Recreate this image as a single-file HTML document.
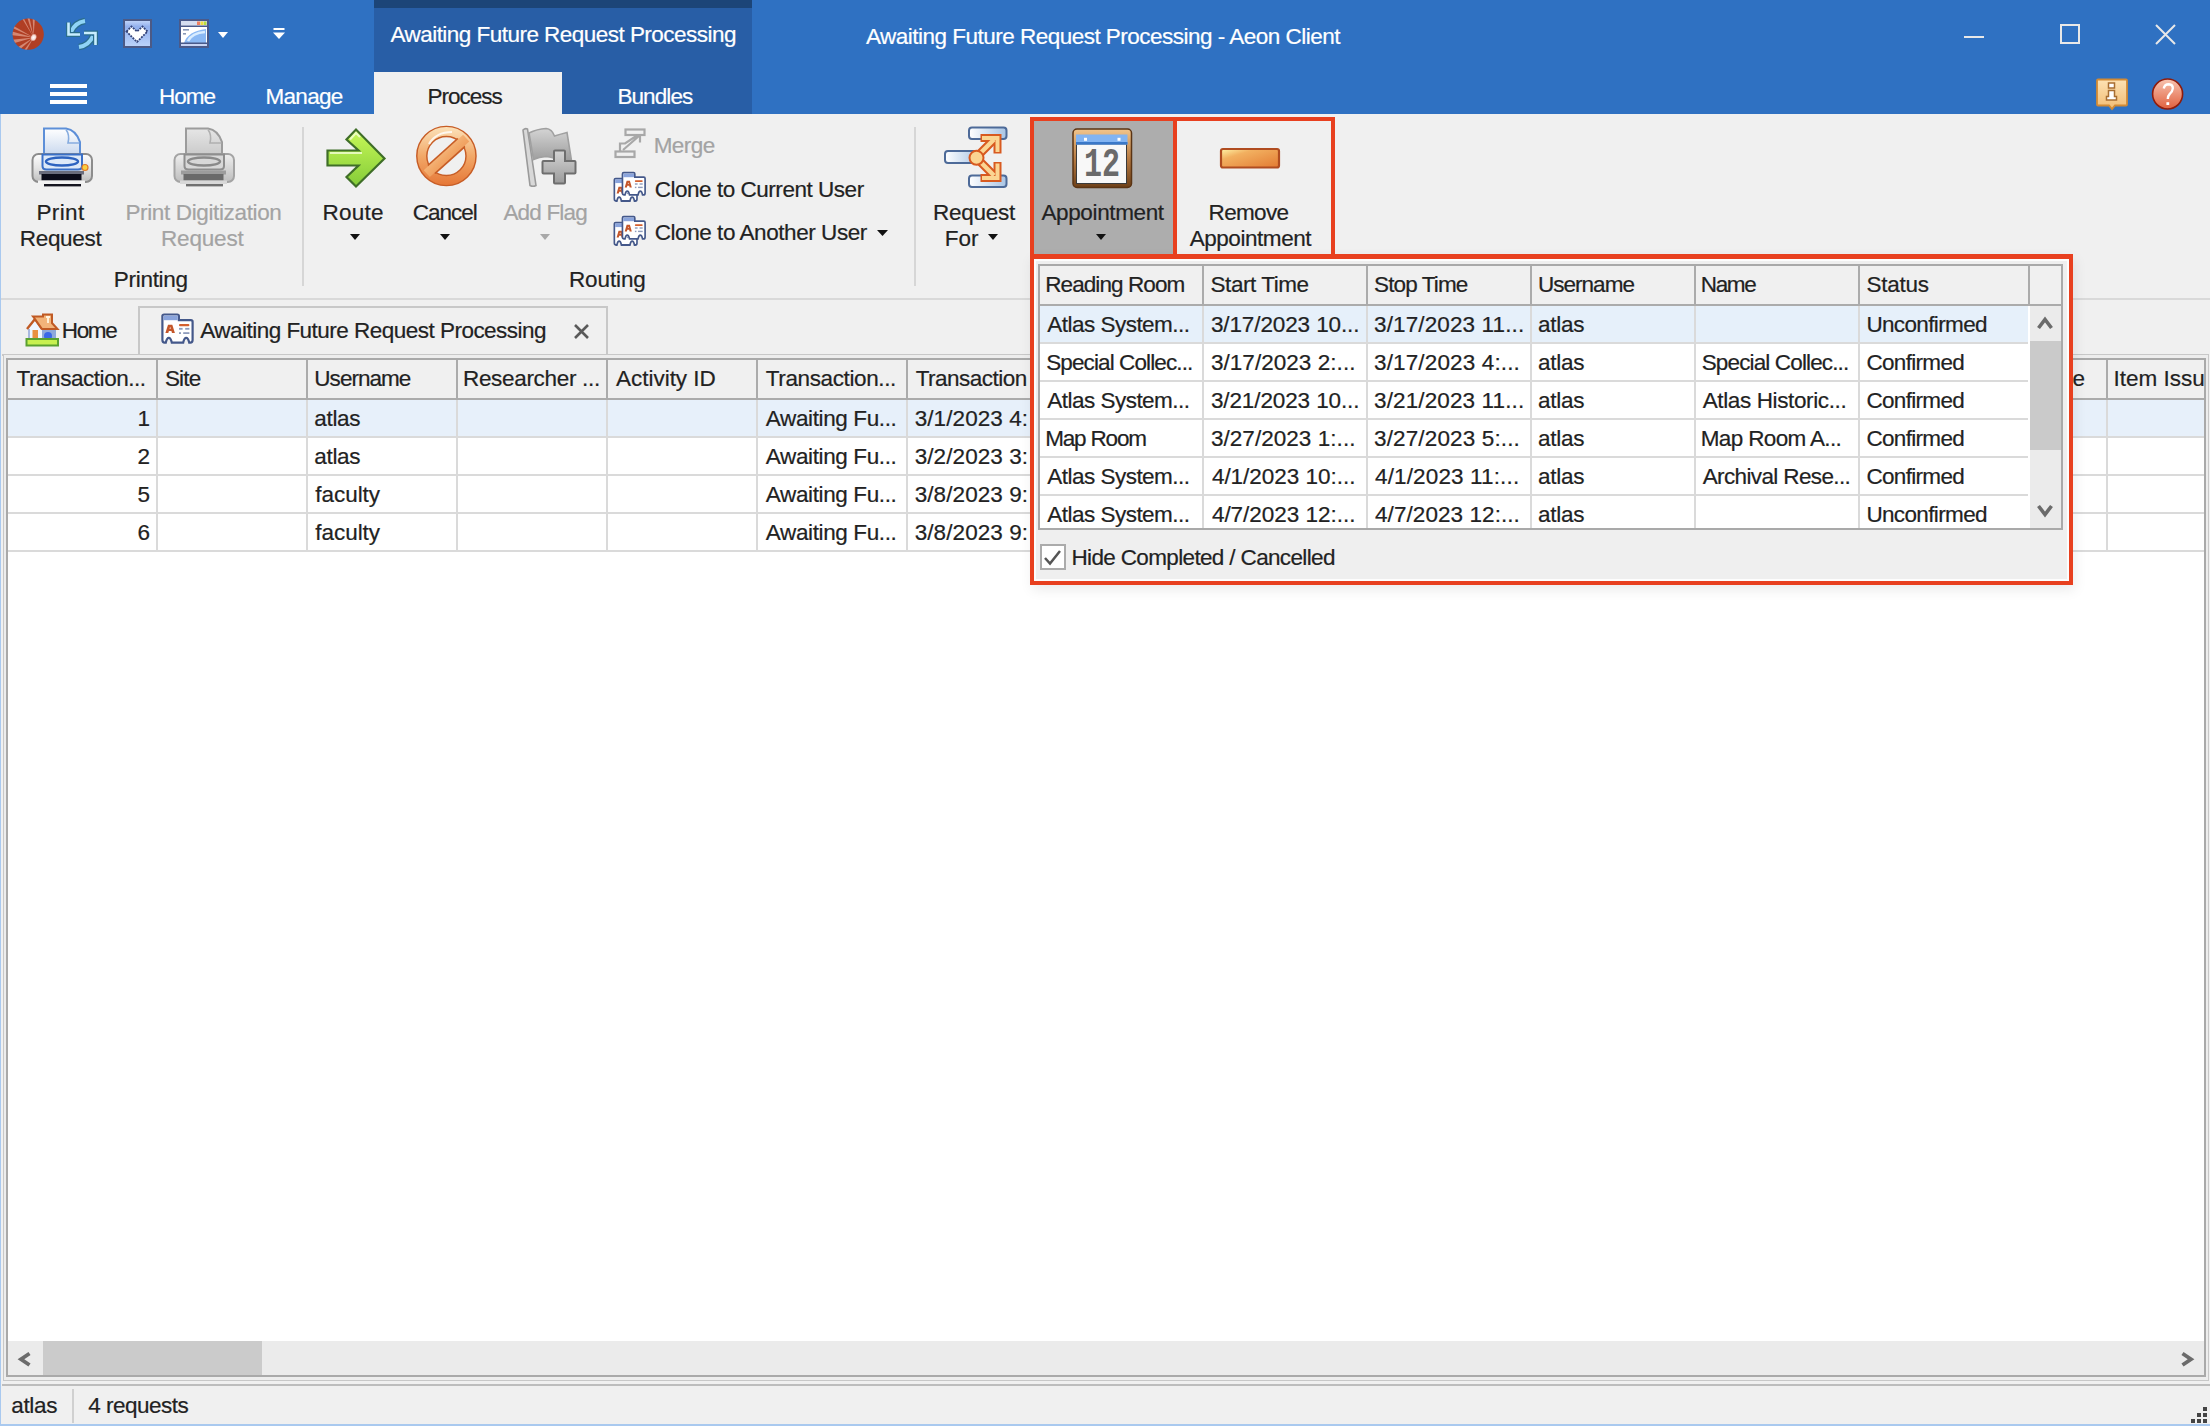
<!DOCTYPE html>
<html><head><meta charset="utf-8">
<style>
*{margin:0;padding:0;box-sizing:border-box}
html,body{width:2210px;height:1426px;overflow:hidden;background:#f0f0f0}
body{position:relative;font-family:"Liberation Sans",sans-serif;font-size:22px;color:#222}
.a{position:absolute}
.t{position:absolute;white-space:nowrap;line-height:22px;height:22px;font-size:22.5px;color:#222;z-index:2;-webkit-text-stroke:0.2px currentColor}
.t.w{color:#fff}
.t.g{color:#a3a3a3}
.t.p{z-index:12}
svg.i{position:absolute;overflow:visible}
.hl{position:absolute;height:2px}
.vl{position:absolute;width:2px}
.z1{z-index:1}
.pop{z-index:10}
.pop2{z-index:11}
.top{z-index:13}
</style></head><body>
<!-- ===== HEADER ===== -->
<div class="a" style="left:0;top:0;width:2210px;height:114px;background:#2f71c2"></div>
<div class="a" style="left:374px;top:0;width:378px;height:114px;background:#285ea6"></div>
<div class="a" style="left:374px;top:0;width:378px;height:8px;background:#1c4578"></div>
<div class="a" style="left:374px;top:72px;width:188px;height:42px;background:#f0f0f0"></div>
<!-- hamburger -->
<div class="a" style="left:50px;top:84px;width:37px;height:4px;background:#fff"></div>
<div class="a" style="left:50px;top:92px;width:37px;height:4px;background:#fff"></div>
<div class="a" style="left:50px;top:100px;width:37px;height:4px;background:#fff"></div>
<!-- window controls -->
<div class="a" style="left:1964px;top:36px;width:20px;height:2px;background:#e8e8e8"></div>
<div class="a" style="left:2060px;top:24px;width:20px;height:20px;border:2px solid #e8e8e8"></div>
<svg class="i" style="left:2155px;top:24px" width="21" height="21"><path d="M1 1L20 20M20 1L1 20" stroke="#e8e8e8" stroke-width="2"/></svg>

<!-- ===== RIBBON ===== -->
<div class="a" style="left:0;top:114px;width:1px;height:1312px;background:#a9c9ef;z-index:20"></div>
<div class="hl" style="left:0;top:298px;width:2210px;background:#d9d9d9"></div>
<div class="vl" style="left:302px;top:127px;height:159px;background:#d6d6d6"></div>
<div class="vl" style="left:914px;top:127px;height:159px;background:#d6d6d6"></div>
<!-- appointment pressed -->
<div class="a" style="left:1034px;top:121px;width:139px;height:133px;background:#adadad"></div>
<!-- red highlight boxes -->
<div class="a" style="left:1030px;top:117px;width:147px;height:141px;border:4px solid #e8401f;z-index:14"></div>
<div class="a" style="left:1173px;top:117px;width:162px;height:141px;border:4px solid #e8401f;z-index:14"></div>

<!-- ===== DOC TABS ===== -->
<div class="hl" style="left:2px;top:354px;width:137px;background:#c8c8c8"></div>
<div class="hl" style="left:606px;top:354px;width:1604px;background:#c8c8c8"></div>
<div class="vl" style="left:138px;top:306px;height:50px;background:#c8c8c8"></div>
<div class="vl" style="left:606px;top:306px;height:50px;background:#c8c8c8"></div>
<div class="hl" style="left:138px;top:306px;width:470px;background:#c8c8c8"></div>
<svg class="i" style="left:574px;top:324px" width="15" height="15"><path d="M1 1L14 14M14 1L1 14" stroke="#5a5a5a" stroke-width="2.6"/></svg>

<!-- ===== MAIN GRID ===== -->
<div class="a" style="left:3px;top:354px;width:2206px;height:1027px;border:1.5px solid #c8c8c8;background:#ededed"></div>
<div class="a" style="left:6px;top:358px;width:2202px;height:1019px;border:2px solid #a9a9a9;background:#fff"></div>
<div class="a" style="left:8px;top:360px;width:2196px;height:38px;background:#f0f0f0"></div>
<div class="hl" style="left:8px;top:398px;width:2196px;background:#ababab"></div>
<div class="a" style="left:8px;top:400px;width:2196px;height:36px;background:#e7f0fa"></div>
<div class="vl" style="left:156px;top:360px;height:38px;background:#ababab"></div>
<div class="vl" style="left:156px;top:400px;height:152px;background:#dadada"></div>
<div class="vl" style="left:306px;top:360px;height:38px;background:#ababab"></div>
<div class="vl" style="left:306px;top:400px;height:152px;background:#dadada"></div>
<div class="vl" style="left:456px;top:360px;height:38px;background:#ababab"></div>
<div class="vl" style="left:456px;top:400px;height:152px;background:#dadada"></div>
<div class="vl" style="left:606px;top:360px;height:38px;background:#ababab"></div>
<div class="vl" style="left:606px;top:400px;height:152px;background:#dadada"></div>
<div class="vl" style="left:756px;top:360px;height:38px;background:#ababab"></div>
<div class="vl" style="left:756px;top:400px;height:152px;background:#dadada"></div>
<div class="vl" style="left:906px;top:360px;height:38px;background:#ababab"></div>
<div class="vl" style="left:906px;top:400px;height:152px;background:#dadada"></div>
<div class="vl" style="left:1056px;top:360px;height:38px;background:#ababab"></div>
<div class="vl" style="left:1056px;top:400px;height:152px;background:#dadada"></div>
<div class="vl" style="left:1206px;top:360px;height:38px;background:#ababab"></div>
<div class="vl" style="left:1206px;top:400px;height:152px;background:#dadada"></div>
<div class="vl" style="left:1356px;top:360px;height:38px;background:#ababab"></div>
<div class="vl" style="left:1356px;top:400px;height:152px;background:#dadada"></div>
<div class="vl" style="left:1506px;top:360px;height:38px;background:#ababab"></div>
<div class="vl" style="left:1506px;top:400px;height:152px;background:#dadada"></div>
<div class="vl" style="left:1656px;top:360px;height:38px;background:#ababab"></div>
<div class="vl" style="left:1656px;top:400px;height:152px;background:#dadada"></div>
<div class="vl" style="left:1806px;top:360px;height:38px;background:#ababab"></div>
<div class="vl" style="left:1806px;top:400px;height:152px;background:#dadada"></div>
<div class="vl" style="left:1956px;top:360px;height:38px;background:#ababab"></div>
<div class="vl" style="left:1956px;top:400px;height:152px;background:#dadada"></div>
<div class="vl" style="left:2106px;top:360px;height:38px;background:#ababab"></div>
<div class="vl" style="left:2106px;top:400px;height:152px;background:#dadada"></div>
<div class="hl" style="left:8px;top:436px;width:2196px;background:#dadada"></div>
<div class="hl" style="left:8px;top:474px;width:2196px;background:#dadada"></div>
<div class="hl" style="left:8px;top:512px;width:2196px;background:#dadada"></div>
<div class="hl" style="left:8px;top:550px;width:2196px;background:#dadada"></div>
<div class="a" style="left:2204px;top:358px;width:5px;height:1019px;background:#ededed;z-index:3;border-left:2px solid #a9a9a9;border-right:1.5px solid #c8c8c8"></div>
<div class="a" style="left:2209px;top:354px;width:1px;height:1030px;background:#f0f0f0;z-index:3"></div>
<!-- h scrollbar -->
<div class="a" style="left:8px;top:1341px;width:2196px;height:34px;background:#ebebeb;z-index:3"></div>
<div class="a" style="left:43px;top:1341px;width:219px;height:34px;background:#cbcbcb;z-index:3"></div>
<svg class="i" style="left:18px;top:1352px;z-index:3" width="13" height="14"><path d="M11.5 1.5L3 7.2L11.5 13" fill="none" stroke="#6b6b6b" stroke-width="3.8"/></svg>
<svg class="i" style="left:2181px;top:1352px;z-index:3" width="13" height="14"><path d="M1.5 1.5L10 7.2L1.5 13" fill="none" stroke="#6b6b6b" stroke-width="3.8"/></svg>

<!-- ===== STATUS BAR ===== -->
<div class="hl" style="left:2px;top:1384px;width:2208px;background:#bdbdbd"></div>
<div class="vl" style="left:72px;top:1389px;height:34px;background:#d0d0d0"></div>
<div class="hl" style="left:0;top:1424px;width:2210px;background:#a9c9ef"></div>
<svg class="i" style="left:2190px;top:1406px" width="18" height="18"><g fill="#444"><rect x="13" y="1" width="4" height="4"/><rect x="7" y="7" width="4" height="4"/><rect x="13" y="7" width="4" height="4"/><rect x="1" y="13" width="4" height="4"/><rect x="7" y="13" width="4" height="4"/><rect x="13" y="13" width="4" height="4"/></g></svg>

<!-- ===== POPUP ===== -->
<div class="a pop" style="left:1030px;top:254px;width:1043px;height:331px;background:#efefef;box-shadow:2px 5px 12px rgba(0,0,0,0.08)"></div>
<div class="a pop" style="left:1034px;top:259px;width:1035px;height:322px;border:2px solid #fdfdfd"></div>
<div class="a pop" style="left:1038px;top:264px;width:1025px;height:266px;border:2px solid #a9a9a9;background:#fff"></div>
<div class="a pop" style="left:1040px;top:266px;width:1021px;height:38px;background:#f0f0f0"></div>
<div class="hl pop" style="left:1040px;top:304px;width:1021px;background:#ababab"></div>
<div class="a pop" style="left:1040px;top:306px;width:988px;height:36px;background:#e6f0fa"></div>
<div class="vl pop" style="left:1202px;top:266px;height:38px;background:#ababab"></div>
<div class="vl pop" style="left:1202px;top:306px;height:222px;background:#dadada"></div>
<div class="vl pop" style="left:1366px;top:266px;height:38px;background:#ababab"></div>
<div class="vl pop" style="left:1366px;top:306px;height:222px;background:#dadada"></div>
<div class="vl pop" style="left:1530px;top:266px;height:38px;background:#ababab"></div>
<div class="vl pop" style="left:1530px;top:306px;height:222px;background:#dadada"></div>
<div class="vl pop" style="left:1694px;top:266px;height:38px;background:#ababab"></div>
<div class="vl pop" style="left:1694px;top:306px;height:222px;background:#dadada"></div>
<div class="vl pop" style="left:1858px;top:266px;height:38px;background:#ababab"></div>
<div class="vl pop" style="left:1858px;top:306px;height:222px;background:#dadada"></div>
<div class="vl pop" style="left:2028px;top:266px;height:38px;background:#ababab"></div>
<div class="hl pop" style="left:1040px;top:342px;width:988px;background:#dadada"></div>
<div class="hl pop" style="left:1040px;top:380px;width:988px;background:#dadada"></div>
<div class="hl pop" style="left:1040px;top:418px;width:988px;background:#dadada"></div>
<div class="hl pop" style="left:1040px;top:456px;width:988px;background:#dadada"></div>
<div class="hl pop" style="left:1040px;top:494px;width:988px;background:#dadada"></div>
<!-- popup scrollbar -->
<div class="a pop" style="left:2030px;top:306px;width:31px;height:222px;background:#ebebeb"></div>
<div class="a pop" style="left:2030px;top:341px;width:31px;height:109px;background:#cacaca"></div>
<svg class="i pop" style="left:2037px;top:316px" width="16" height="13"><path d="M1.5 12L8 3.5L14.5 12" fill="none" stroke="#6b6b6b" stroke-width="3.6"/></svg>
<svg class="i pop" style="left:2037px;top:505px" width="16" height="13"><path d="M1.5 1L8 9.5L14.5 1" fill="none" stroke="#6b6b6b" stroke-width="3.6"/></svg>
<!-- checkbox -->
<div class="a pop" style="left:1040px;top:544px;width:26px;height:26px;border:2px solid #ababab;background:#fff"></div>
<svg class="i pop2" style="left:1043px;top:549px" width="20" height="17"><path d="M2 9L7 14.5L17 2" fill="none" stroke="#555" stroke-width="2.5"/></svg>
<div class="a top" style="left:1030px;top:254px;width:1043px;height:331px;border:4px solid #e8401f;border-top-width:5px"></div>
<!-- ===== ICONS ===== -->
<svg width="0" height="0" style="position:absolute">
<defs>
<linearGradient id="gPaper" x1="0" y1="0" x2="0" y2="1"><stop offset="0" stop-color="#ffffff"/><stop offset="1" stop-color="#c9d8ee"/></linearGradient>
<linearGradient id="gBody" x1="0" y1="0" x2="0" y2="1"><stop offset="0" stop-color="#fdfdfd"/><stop offset="0.5" stop-color="#e4e4e4"/><stop offset="1" stop-color="#bdbdbd"/></linearGradient>
<linearGradient id="gGreen" x1="0" y1="0" x2="0" y2="1"><stop offset="0" stop-color="#c8f858"/><stop offset="1" stop-color="#84cc38"/></linearGradient>
<linearGradient id="gOrange" x1="0" y1="0" x2="0" y2="1"><stop offset="0" stop-color="#fbe0b0"/><stop offset="0.55" stop-color="#f0a060"/><stop offset="1" stop-color="#e57a3a"/></linearGradient>
<linearGradient id="gGray" x1="0" y1="0" x2="0" y2="1"><stop offset="0" stop-color="#d4d4d4"/><stop offset="1" stop-color="#9a9a9a"/></linearGradient>
<linearGradient id="gBrown" x1="0" y1="0" x2="0" y2="1"><stop offset="0" stop-color="#f2c58c"/><stop offset="0.5" stop-color="#b87c44"/><stop offset="1" stop-color="#6e4018"/></linearGradient>
<linearGradient id="gBar" x1="0" y1="0" x2="1" y2="1"><stop offset="0" stop-color="#fff4a8"/><stop offset="0.3" stop-color="#f2b060"/><stop offset="1" stop-color="#e27a32"/></linearGradient>
<linearGradient id="gInfo" x1="0" y1="0" x2="0" y2="1"><stop offset="0" stop-color="#fde2b4"/><stop offset="1" stop-color="#f2bc74"/></linearGradient>
<linearGradient id="gHelp" x1="0" y1="0" x2="0" y2="1"><stop offset="0" stop-color="#f8c4b0"/><stop offset="1" stop-color="#e0603e"/></linearGradient>
<linearGradient id="gBlueBar" x1="0" y1="0" x2="1" y2="0"><stop offset="0" stop-color="#ffffff"/><stop offset="1" stop-color="#a8c4e4"/></linearGradient>
<radialGradient id="gLogo" cx="0.68" cy="0.6" r="0.7"><stop offset="0" stop-color="#ffffff"/><stop offset="0.15" stop-color="#e8a894"/><stop offset="0.5" stop-color="#c05436"/><stop offset="1" stop-color="#b03c20"/></radialGradient>
<g id="printer">
  <path d="M18 6.5H40Q50 8 54 20V33H18Z" fill="url(#gPaper)" stroke="#5d8fd8" stroke-width="2"/>
  <path d="M40 7.5Q44 13 42 21H53.5" fill="none" stroke="#86acdf" stroke-width="1.6"/>
  <rect x="6.5" y="32" width="59.5" height="28" rx="6" fill="url(#gBody)" stroke="#8c8c8c" stroke-width="2"/>
  <path d="M16.5 32.5H56V44Q56 47.5 52 47.5H20.5Q16.5 47.5 16.5 44Z" fill="#dde9f8" stroke="#3a70c8" stroke-width="2"/>
  <ellipse cx="36" cy="39.5" rx="16" ry="4" fill="none" stroke="#2d63c0" stroke-width="2.4"/>
  <rect x="13" y="49" width="45" height="3.5" fill="#6a6c7c"/>
  <rect x="15.5" y="52" width="40" height="6.5" fill="#0c0c1a"/>
  <rect x="12" y="58.5" width="47" height="3.5" fill="#f2f2f2"/>
  <rect x="18" y="62" width="37" height="2.4" fill="#15151f"/>
  <circle cx="59" cy="45.5" r="3" fill="#f8d040" stroke="#e07a2a" stroke-width="1.2"/>
</g>
<g id="printerG">
  <path d="M18 6.5H40Q50 8 54 20V33H18Z" fill="url(#gPaperG)" stroke="#9c9c9c" stroke-width="2"/>
  <path d="M40 7.5Q44 13 42 21H53.5" fill="none" stroke="#b0b0b0" stroke-width="1.6"/>
  <rect x="6.5" y="32" width="59.5" height="28" rx="6" fill="url(#gBodyG)" stroke="#a4a4a4" stroke-width="2"/>
  <path d="M16.5 32.5H56V44Q56 47.5 52 47.5H20.5Q16.5 47.5 16.5 44Z" fill="#d8d8d8" stroke="#8e8e8e" stroke-width="2"/>
  <ellipse cx="36" cy="39.5" rx="16" ry="4" fill="none" stroke="#8a8a8a" stroke-width="2.4"/>
  <rect x="13" y="48.5" width="45" height="4" fill="#9c9c9c"/>
  <rect x="15.5" y="52" width="40" height="6.5" fill="#6a6a6a"/>
  <rect x="12" y="58.5" width="47" height="3.5" fill="#d8d8d8"/>
  <rect x="18" y="62" width="37" height="2.4" fill="#707070"/>
</g>
<linearGradient id="gPaperG" x1="0" y1="0" x2="0" y2="1"><stop offset="0" stop-color="#e6e6e6"/><stop offset="1" stop-color="#cacaca"/></linearGradient>
<linearGradient id="gBodyG" x1="0" y1="0" x2="0" y2="1"><stop offset="0" stop-color="#efefef"/><stop offset="1" stop-color="#bdbdbd"/></linearGradient>
<g id="card">
  <path d="M1 7V2.5Q1 0.9 2.8 0.9H15.8Q17.5 0.9 17.5 2.5V6.5H29.5Q31.2 6.5 31.2 8.2V26.5Q31.2 29 29 29H27.8Q26.8 24.3 24.8 24.3Q22.8 24.3 21.8 29H10.4Q9.4 24.3 7.4 24.3Q5.4 24.3 4.4 29H3.2Q1 29 1 26.5Z" fill="#fff" stroke="#44588a" stroke-width="2.2"/>
  <path d="M2.1 2H16.4V6.6H2.1Z" fill="#8aa4dc"/>
  <path d="M4 19.5L6.6 11.2H10.9L13.5 19.5H10.6L10 17.4H7.5L6.9 19.5ZM8.1 15.2H9.4L8.75 13.2Z" fill="#c4562a" fill-rule="evenodd"/>
  <rect x="17.6" y="10.4" width="10.4" height="2.2" rx="1" fill="#d4602e"/>
  <rect x="17.6" y="14.3" width="3.6" height="1.8" fill="#8e9cbc"/><rect x="23.8" y="14.3" width="4.2" height="1.8" fill="#8e9cbc"/>
  <rect x="17.6" y="18.6" width="2" height="1.8" fill="#8e9cbc"/><rect x="21.8" y="18.6" width="6.2" height="1.8" fill="#8e9cbc"/>
</g>
</defs>
</svg>

<!-- QAT -->
<svg class="i" style="left:12px;top:18px" width="32" height="33" viewBox="0 0 32 33">
  <defs><clipPath id="cLogo"><circle cx="16.2" cy="16.2" r="15.6"/></clipPath>
  <radialGradient id="gSpot" cx="0.5" cy="0.5" r="0.5"><stop offset="0" stop-color="#fff"/><stop offset="0.6" stop-color="#f6d8d0"/><stop offset="1" stop-color="#f6d8d0" stop-opacity="0"/></radialGradient></defs>
  <circle cx="16.2" cy="16.2" r="15.6" fill="#b13f24"/>
  <g clip-path="url(#cLogo)" fill="#e2a08c" opacity="0.75">
    <path d="M21.6 19.5L-2 13L-2 17Z"/><path d="M21.6 19.5L-1 6.5L0.5 10Z"/><path d="M21.6 19.5L2 -0.5L4.5 2Z"/><path d="M21.6 19.5L8 -3L10.5 -2Z"/>
    <path d="M21.6 19.5L14.5 -3L17 -3Z"/><path d="M21.6 19.5L20.5 -3L23 -2Z"/><path d="M21.6 19.5L-2 22L-1 26Z"/><path d="M21.6 19.5L3 31L6 33Z"/><path d="M21.6 19.5L10 35L13 35Z"/>
  </g>
  <ellipse cx="21.6" cy="19.5" rx="3.2" ry="4.2" transform="rotate(25 21.6 19.5)" fill="url(#gSpot)"/>
</svg>
<svg class="i" style="left:66px;top:19px" width="32" height="31" viewBox="0 0 32 31">
  <g fill="none" stroke-linecap="butt">
    <path d="M5 13Q9 3.5 19 2" stroke="#2b6e8c" stroke-width="6.5"/>
    <path d="M5 13Q9 3.5 19 2" stroke="#90d4f6" stroke-width="4"/>
    <path d="M27 17Q23 26.5 13 28" stroke="#2b6e8c" stroke-width="6.5"/>
    <path d="M27 17Q23 26.5 13 28" stroke="#90d4f6" stroke-width="4"/>
    <path d="M2.5 3.5V15.5H14" stroke="#2b6e8c" stroke-width="5"/>
    <path d="M2.5 3.5V15.5H14" stroke="#c8eeff" stroke-width="2.6"/>
    <path d="M29.5 26V14H18" stroke="#2b6e8c" stroke-width="5"/>
    <path d="M29.5 26V14H18" stroke="#c8eeff" stroke-width="2.6"/>
  </g>
</svg>
<svg class="i" style="left:123px;top:19px" width="29" height="29" viewBox="0 0 29 29">
  <defs><linearGradient id="gHb" x1="0" y1="0" x2="0" y2="1"><stop offset="0" stop-color="#c6d8fa"/><stop offset="0.25" stop-color="#92b0ee"/><stop offset="1" stop-color="#bcd4fa"/></linearGradient></defs>
  <rect x="1" y="1" width="27" height="27" fill="url(#gHb)" stroke="#4c5a86" stroke-width="2"/>
  <path d="M3.5 12.5L8.5 7.5L14 12.5L19.5 7.5L24.5 12.5L14 23Z" fill="#fff" stroke="#34447a" stroke-width="1.8" stroke-dasharray="2 1"/>
</svg>
<svg class="i" style="left:179px;top:19px" width="30" height="29" viewBox="0 0 30 29">
  <rect x="1" y="1" width="28" height="27" fill="#fff" stroke="#4a5a8a" stroke-width="2"/>
  <rect x="2" y="2" width="26" height="4.5" fill="#d6def0"/>
  <rect x="18" y="2.5" width="3" height="3.5" fill="#f08060"/><rect x="21.5" y="2.5" width="3" height="3.5" fill="#f0e040"/><rect x="25" y="2.5" width="2.5" height="3.5" fill="#b8e040"/>
  <rect x="2" y="6.5" width="26" height="1.5" fill="#4a5a8a"/>
  <path d="M5 24Q9 12 27 10V24Z" fill="#8ab8f4"/>
  <path d="M9 22Q13 14 26 13" fill="none" stroke="#d8ecff" stroke-width="2.5"/>
  <rect x="4" y="10" width="6" height="1.6" fill="#8898b8"/><rect x="4" y="14" width="3" height="1.6" fill="#8898b8"/>
  <rect x="2" y="23.5" width="26" height="1.5" fill="#4a5a8a"/>
  <rect x="2" y="25" width="26" height="2" fill="#c8d4f4"/>
</svg>
<svg class="i" style="left:218px;top:32px" width="10" height="6"><path d="M0 0H10L5 6Z" fill="#fff"/></svg>
<svg class="i" style="left:273px;top:28px" width="12" height="11"><rect x="0.5" y="0" width="11" height="2" fill="#fff"/><path d="M0 4.5H12L6 11Z" fill="#fff"/></svg>

<!-- info / help -->
<svg class="i" style="left:2095px;top:78px" width="34" height="32" viewBox="0 0 34 32">
  <path d="M2 2.5Q2 1.5 3 1.5H31Q32 1.5 32 2.5V26.5Q32 27.5 31 27.5H20L17 31L14 27.5H3Q2 27.5 2 26.5Z" fill="url(#gInfo)" stroke="#d28a34" stroke-width="1.8"/>
  <path d="M13.5 5H19.5V10H13.5ZM13.5 12.5H19.5V18.5H21.5V22H11.5V18.5H13.5Z" fill="#fff" stroke="#a86e32" stroke-width="1.5"/>
</svg>
<svg class="i" style="left:2151px;top:78px" width="34" height="33" viewBox="0 0 34 33">
  <circle cx="16.6" cy="16" r="15" fill="url(#gHelp)" stroke="#8e1c0c" stroke-width="1.6"/>
  <path d="M12.8 10.5Q13.5 6.2 17.8 6.2Q22 6.5 21.8 10.5Q21.5 13.5 18.8 15.8Q16.8 17.8 16.8 21" fill="none" stroke="#fff" stroke-width="2.4"/>
  <rect x="15.4" y="24.2" width="2.8" height="2.8" fill="#fff"/>
</svg>

<!-- ribbon large icons -->
<svg class="i" style="left:26px;top:122px" width="72" height="68" viewBox="0 0 72 68"><use href="#printer"/></svg>
<svg class="i" style="left:168px;top:122px" width="72" height="68" viewBox="0 0 72 68"><use href="#printerG"/></svg>
<svg class="i" style="left:320px;top:120px" width="70" height="72" viewBox="0 0 70 72">
  <path d="M7.5 30.5H38.5L26.5 19.5L36 9.5L64.5 38.5L36 66.5L26.5 57L38.5 45.5H7.5Z" fill="url(#gGreen)" stroke="#3f6e28" stroke-width="2.2" stroke-linejoin="miter"/>
  <path d="M10 33H42" stroke="#f4ffd8" stroke-width="2" opacity="0.8"/>
  <path d="M30 19.5L36 13L40 17" stroke="#f4ffd8" stroke-width="2" fill="none" opacity="0.8"/>
</svg>
<svg class="i" style="left:410px;top:120px" width="72" height="72" viewBox="0 0 72 72">
  <defs><linearGradient id="gOr2" gradientUnits="userSpaceOnUse" x1="0" y1="6" x2="0" y2="66"><stop offset="0" stop-color="#fce4bc"/><stop offset="0.5" stop-color="#f2a868"/><stop offset="1" stop-color="#e57636"/></linearGradient>
  <clipPath id="cIn"><circle cx="36.4" cy="36" r="21"/></clipPath><clipPath id="cOut"><circle cx="36.4" cy="36" r="28"/></clipPath></defs>
  <circle cx="36.4" cy="36" r="24.6" fill="none" stroke="#c75d26" stroke-width="11.5"/>
  <circle cx="36.4" cy="36" r="24.6" fill="none" stroke="url(#gOr2)" stroke-width="8.6"/>
  <rect x="10" y="29.8" width="53" height="12.4" transform="rotate(-42 36.4 36)" fill="#c75d26" clip-path="url(#cIn)"/>
  <g clip-path="url(#cOut)"><rect x="10" y="31.4" width="53" height="9.2" transform="rotate(-42 36.4 36)" fill="url(#gOr2)"/></g>
  <path d="M19 24Q26 12 42 12" fill="none" stroke="#fff" stroke-width="2.2" opacity="0.8"/>
</svg>
<svg class="i" style="left:515px;top:120px" width="72" height="72" viewBox="0 0 72 72">
  <path d="M8 10Q10 8 12.5 9L21 65.5Q18 67 15 65.5Z" fill="#d8d8d8" stroke="#9a9a9a" stroke-width="1.6"/>
  <path d="M14 13Q22 9 31 8.5Q37 9 39.5 16Q46 14 52 12.5L56.5 40.5Q50 44 44 41Q38 37 31 36.5Q24 37 18.5 39.5Z" fill="url(#gGray)" stroke="#a0a0a0" stroke-width="1.6"/>
  <path d="M39 31.5Q39 30.5 40 30.5H49Q50 30.5 50 31.5V41H59.5Q60.5 41 60.5 42V52.5Q60.5 53.5 59.5 53.5H50V62.5Q50 63.5 49 63.5H40Q39 63.5 39 62.5V53.5H28.5Q27.5 53.5 27.5 52.5V42Q27.5 41 28.5 41H39Z" fill="url(#gGray)" stroke="#6e6e6e" stroke-width="2"/>
</svg>
<!-- merge -->
<svg class="i" style="left:608px;top:124px" width="44" height="38" viewBox="0 0 44 38">
  <g fill="none" stroke="#a8a8a8" stroke-width="2.2">
    <rect x="17.5" y="5.5" width="19" height="5.5"/>
    <rect x="7.5" y="27.5" width="19" height="5.5"/>
    <path d="M12 27V19.5H17L29 11.5M32 11.5V18.5M15 26L31 12"/>
  </g>
</svg>
<!-- clone icons -->
<svg class="i" style="left:608px;top:172px" width="44" height="34" viewBox="0 0 44 34"><g transform="translate(5.6,5.8) scale(0.75,0.8)"><use href="#card"/></g><g transform="translate(13.7,0) scale(0.75,0.79)"><use href="#card"/></g></svg>
<svg class="i" style="left:608px;top:216px" width="44" height="34" viewBox="0 0 44 34"><g transform="translate(5.6,5.8) scale(0.75,0.8)"><use href="#card"/></g><g transform="translate(13.7,0) scale(0.75,0.79)"><use href="#card"/></g></svg>
<!-- request for -->
<svg class="i" style="left:938px;top:120px" width="76" height="76" viewBox="0 0 76 76">
  <rect x="31" y="7.5" width="37.5" height="11.5" rx="3" fill="url(#gBlueBar)" stroke="#4d6a98" stroke-width="2"/>
  <rect x="7" y="31" width="34" height="12" rx="3" fill="url(#gBlueBar)" stroke="#4d6a98" stroke-width="2"/>
  <rect x="31" y="55.5" width="37.5" height="11.5" rx="3" fill="url(#gBlueBar)" stroke="#4d6a98" stroke-width="2"/>
  <g fill="none" stroke-linejoin="miter">
    <path d="M38 37.5L56 19.5M38 37.5L56 55.5" stroke="#d85a20" stroke-width="8.5"/>
    <path d="M42.5 18H59.5V33.5M42.5 58H59.5V42" stroke="#d85a20" stroke-width="8"/>
    <path d="M38 37.5L56 19.5M38 37.5L56 55.5" stroke="#fbd592" stroke-width="4.5"/>
    <path d="M44 18H59.5V32M44 58H59.5V43.5" stroke="#fbd592" stroke-width="4"/>
  </g>
  <circle cx="38.5" cy="37.8" r="7" fill="#fbd592" stroke="#d85a20" stroke-width="2"/>
</svg>
<!-- calendar -->
<svg class="i" style="left:1066px;top:122px" width="72" height="72" viewBox="0 0 72 72">
  <rect x="7" y="7" width="58.5" height="58.5" rx="4" fill="url(#gBrown)" stroke="#5a3414" stroke-width="1.5"/>
  <rect x="10.5" y="22" width="50" height="39.5" fill="#f8f8f8" stroke="#3a3a3a" stroke-width="1"/>
  <rect x="10" y="12.5" width="51.5" height="10" fill="#82b4f2"/>
  <rect x="10" y="20" width="51.5" height="2.5" fill="#3a78c8"/>
  <rect x="18" y="15.8" width="3" height="3" fill="#fff"/><rect x="51.5" y="15.8" width="3" height="3" fill="#fff"/>
  <text x="17.9" y="54" font-family="Liberation Mono" font-size="40" font-weight="bold" fill="#6a6a6a" textLength="36" lengthAdjust="spacingAndGlyphs">12</text>
</svg>
<!-- remove bar -->
<svg class="i" style="left:1210px;top:138px" width="80" height="40" viewBox="0 0 80 40">
  <rect x="11" y="11" width="58" height="18.5" rx="2" fill="url(#gBar)" stroke="#b04c20" stroke-width="2.2"/>
</svg>

<!-- dropdown arrows -->
<svg class="i" style="left:350px;top:234px" width="10" height="6"><path d="M0 0H10L5 6Z" fill="#111"/></svg>
<svg class="i" style="left:440px;top:234px" width="10" height="6"><path d="M0 0H10L5 6Z" fill="#111"/></svg>
<svg class="i" style="left:540px;top:234px" width="10" height="6"><path d="M0 0H10L5 6Z" fill="#a8a8a8"/></svg>
<svg class="i" style="left:877px;top:230px" width="11" height="6"><path d="M0 0H11L5.5 6Z" fill="#111"/></svg>
<svg class="i" style="left:988px;top:234px" width="10" height="6"><path d="M0 0H10L5 6Z" fill="#111"/></svg>
<svg class="i" style="left:1096px;top:234px" width="10" height="6"><path d="M0 0H10L5 6Z" fill="#111"/></svg>

<!-- doc tab icons -->
<svg class="i" style="left:22px;top:308px" width="40" height="42" viewBox="0 0 40 42">
  <rect x="6" y="20" width="28" height="12" fill="#eef6ff"/>
  <rect x="20" y="21" width="14" height="11" fill="#8ea8dc"/>
  <rect x="6" y="21" width="2" height="11" fill="#a8b8e0"/>
  <rect x="10.5" y="22" width="5.5" height="10" fill="#e89040"/>
  <circle cx="26" cy="28" r="4" fill="#3a68e8"/>
  <path d="M5 21L13 11L20 21" fill="#eef6ff" stroke="#c05a24" stroke-width="2.4"/>
  <path d="M11 8.5H21V6.5H30V15L35.5 21H20L13 11Z" fill="#f2b47a" stroke="#c05a24" stroke-width="2"/>
  <path d="M24 9H28M26 9V15" stroke="#fff5e0" stroke-width="1.8"/>
  <path d="M4.5 31H36V37.5H4.5Z" fill="#c8f050" stroke="#5aa030" stroke-width="2"/>
</svg>
<svg class="i" style="left:158px;top:308px" width="40" height="42" viewBox="0 0 40 42"><g transform="translate(3.4,5.6)"><use href="#card"/></g></svg>
<div class="t w" style="left:390.4px;top:24px;letter-spacing:-0.53px">Awaiting Future Request Processing</div>
<div class="t w" style="left:865.9px;top:26px;letter-spacing:-0.51px">Awaiting Future Request Processing - Aeon Client</div>
<div class="t w" style="left:159.0px;top:86px;letter-spacing:-1.00px">Home</div>
<div class="t w" style="left:265.5px;top:86px;letter-spacing:-0.70px">Manage</div>
<div class="t" style="left:427.4px;top:86px;letter-spacing:-0.98px">Process</div>
<div class="t w" style="left:617.4px;top:86px;letter-spacing:-0.90px">Bundles</div>
<div class="t" style="left:36.4px;top:202px;letter-spacing:0.40px">Print</div>
<div class="t" style="left:19.7px;top:228px;letter-spacing:-0.28px">Request</div>
<div class="t g" style="left:125.4px;top:202px;letter-spacing:-0.36px">Print Digitization</div>
<div class="t g" style="left:161.0px;top:228px;letter-spacing:-0.17px">Request</div>
<div class="t" style="left:113.8px;top:269px;letter-spacing:-0.29px">Printing</div>
<div class="t" style="left:322.6px;top:202px;letter-spacing:0.22px">Route</div>
<div class="t" style="left:412.7px;top:202px;letter-spacing:-1.00px">Cancel</div>
<div class="t g" style="left:503.4px;top:202px;letter-spacing:-0.81px">Add Flag</div>
<div class="t g" style="left:653.7px;top:135px;letter-spacing:-0.58px">Merge</div>
<div class="t" style="left:654.7px;top:179px;letter-spacing:-0.47px">Clone to Current User</div>
<div class="t" style="left:654.7px;top:222px;letter-spacing:-0.44px">Clone to Another User</div>
<div class="t" style="left:569.0px;top:269px;letter-spacing:-0.13px">Routing</div>
<div class="t" style="left:932.9px;top:202px;letter-spacing:-0.23px">Request</div>
<div class="t" style="left:944.8px;top:228px;letter-spacing:-0.05px">For</div>
<div class="t" style="left:1041.4px;top:202px;letter-spacing:-0.36px">Appointment</div>
<div class="t" style="left:1208.6px;top:202px;letter-spacing:-0.66px">Remove</div>
<div class="t" style="left:1189.7px;top:228px;letter-spacing:-0.45px">Appointment</div>
<div class="t" style="left:61.8px;top:320px;letter-spacing:-1.37px">Home</div>
<div class="t" style="left:200.2px;top:320px;letter-spacing:-0.52px">Awaiting Future Request Processing</div>
<div class="t" style="left:16.5px;top:368px;letter-spacing:-0.45px">Transaction...</div>
<div class="t" style="left:164.9px;top:368px;letter-spacing:-0.80px">Site</div>
<div class="t" style="left:314.3px;top:368px;letter-spacing:-0.96px">Username</div>
<div class="t" style="left:463.0px;top:368px;letter-spacing:-0.32px">Researcher ...</div>
<div class="t" style="left:616.0px;top:368px;letter-spacing:-0.02px">Activity ID</div>
<div class="t" style="left:765.8px;top:368px;letter-spacing:-0.38px">Transaction...</div>
<div class="t" style="left:915.7px;top:368px;letter-spacing:-0.52px">Transaction</div>
<div class="t p" style="left:2072.4px;top:368px">e</div>
<div class="t p" style="left:2113.6px;top:368px;letter-spacing:-0.01px">Item Issu</div>
<div class="t" style="left:137.4px;top:408px">1</div>
<div class="t" style="left:314.3px;top:408px;letter-spacing:-0.33px">atlas</div>
<div class="t" style="left:765.8px;top:408px;letter-spacing:-0.38px">Awaiting Fu...</div>
<div class="t" style="left:914.7px;top:408px;letter-spacing:0.08px">3/1/2023 4:</div>
<div class="t" style="left:137.4px;top:446px">2</div>
<div class="t" style="left:314.3px;top:446px;letter-spacing:-0.33px">atlas</div>
<div class="t" style="left:765.8px;top:446px;letter-spacing:-0.38px">Awaiting Fu...</div>
<div class="t" style="left:914.7px;top:446px;letter-spacing:0.08px">3/2/2023 3:</div>
<div class="t" style="left:137.4px;top:484px">5</div>
<div class="t" style="left:315.3px;top:484px;letter-spacing:-0.05px">faculty</div>
<div class="t" style="left:765.8px;top:484px;letter-spacing:-0.38px">Awaiting Fu...</div>
<div class="t" style="left:914.7px;top:484px;letter-spacing:0.08px">3/8/2023 9:</div>
<div class="t" style="left:137.4px;top:522px">6</div>
<div class="t" style="left:315.3px;top:522px;letter-spacing:-0.05px">faculty</div>
<div class="t" style="left:765.8px;top:522px;letter-spacing:-0.38px">Awaiting Fu...</div>
<div class="t" style="left:914.7px;top:522px;letter-spacing:0.08px">3/8/2023 9:</div>
<div class="t p" style="left:1045.2px;top:274px;letter-spacing:-0.91px">Reading Room</div>
<div class="t p" style="left:1210.5px;top:274px;letter-spacing:-0.44px">Start Time</div>
<div class="t p" style="left:1374.0px;top:274px;letter-spacing:-0.88px">Stop Time</div>
<div class="t p" style="left:1537.9px;top:274px;letter-spacing:-0.96px">Username</div>
<div class="t p" style="left:1700.7px;top:274px;letter-spacing:-1.30px">Name</div>
<div class="t p" style="left:1866.4px;top:274px;letter-spacing:-0.24px">Status</div>
<div class="t p" style="left:1047.2px;top:314px;letter-spacing:-0.51px">Atlas System...</div>
<div class="t p" style="left:1210.9px;top:314px;letter-spacing:-0.11px">3/17/2023 10...</div>
<div class="t p" style="left:1374.0px;top:314px;letter-spacing:0.12px">3/17/2023 11...</div>
<div class="t p" style="left:1537.9px;top:314px;letter-spacing:-0.25px">atlas</div>
<div class="t p" style="left:1866.4px;top:314px;letter-spacing:-0.64px">Unconfirmed</div>
<div class="t p" style="left:1046.2px;top:352px;letter-spacing:-0.89px">Special Collec...</div>
<div class="t p" style="left:1210.9px;top:352px;letter-spacing:0.05px">3/17/2023 2:...</div>
<div class="t p" style="left:1374.0px;top:352px;letter-spacing:0.14px">3/17/2023 4:...</div>
<div class="t p" style="left:1537.9px;top:352px;letter-spacing:-0.25px">atlas</div>
<div class="t p" style="left:1701.7px;top:352px;letter-spacing:-0.86px">Special Collec...</div>
<div class="t p" style="left:1866.4px;top:352px;letter-spacing:-0.68px">Confirmed</div>
<div class="t p" style="left:1047.2px;top:390px;letter-spacing:-0.51px">Atlas System...</div>
<div class="t p" style="left:1210.9px;top:390px;letter-spacing:-0.11px">3/21/2023 10...</div>
<div class="t p" style="left:1374.0px;top:390px;letter-spacing:0.12px">3/21/2023 11...</div>
<div class="t p" style="left:1537.9px;top:390px;letter-spacing:-0.25px">atlas</div>
<div class="t p" style="left:1702.7px;top:390px;letter-spacing:-0.38px">Atlas Historic...</div>
<div class="t p" style="left:1866.4px;top:390px;letter-spacing:-0.68px">Confirmed</div>
<div class="t p" style="left:1045.2px;top:428px;letter-spacing:-1.17px">Map Room</div>
<div class="t p" style="left:1210.9px;top:428px;letter-spacing:0.05px">3/27/2023 1:...</div>
<div class="t p" style="left:1374.0px;top:428px;letter-spacing:0.14px">3/27/2023 5:...</div>
<div class="t p" style="left:1537.9px;top:428px;letter-spacing:-0.25px">atlas</div>
<div class="t p" style="left:1700.7px;top:428px;letter-spacing:-0.64px">Map Room A...</div>
<div class="t p" style="left:1866.4px;top:428px;letter-spacing:-0.68px">Confirmed</div>
<div class="t p" style="left:1047.2px;top:466px;letter-spacing:-0.51px">Atlas System...</div>
<div class="t p" style="left:1211.9px;top:466px;letter-spacing:-0.02px">4/1/2023 10:...</div>
<div class="t p" style="left:1375.0px;top:466px;letter-spacing:0.14px">4/1/2023 11:...</div>
<div class="t p" style="left:1537.9px;top:466px;letter-spacing:-0.25px">atlas</div>
<div class="t p" style="left:1702.7px;top:466px;letter-spacing:-0.63px">Archival Rese...</div>
<div class="t p" style="left:1866.4px;top:466px;letter-spacing:-0.68px">Confirmed</div>
<div class="t p" style="left:1047.2px;top:504px;letter-spacing:-0.51px">Atlas System...</div>
<div class="t p" style="left:1211.9px;top:504px;letter-spacing:-0.02px">4/7/2023 12:...</div>
<div class="t p" style="left:1375.0px;top:504px;letter-spacing:0.07px">4/7/2023 12:...</div>
<div class="t p" style="left:1537.9px;top:504px;letter-spacing:-0.25px">atlas</div>
<div class="t p" style="left:1866.4px;top:504px;letter-spacing:-0.64px">Unconfirmed</div>
<div class="t p" style="left:1071.5px;top:547px;letter-spacing:-0.65px">Hide Completed / Cancelled</div>
<div class="t" style="left:11.2px;top:1395px;letter-spacing:-0.30px">atlas</div>
<div class="t" style="left:88.2px;top:1395px;letter-spacing:-0.50px">4 requests</div>
</body></html>
